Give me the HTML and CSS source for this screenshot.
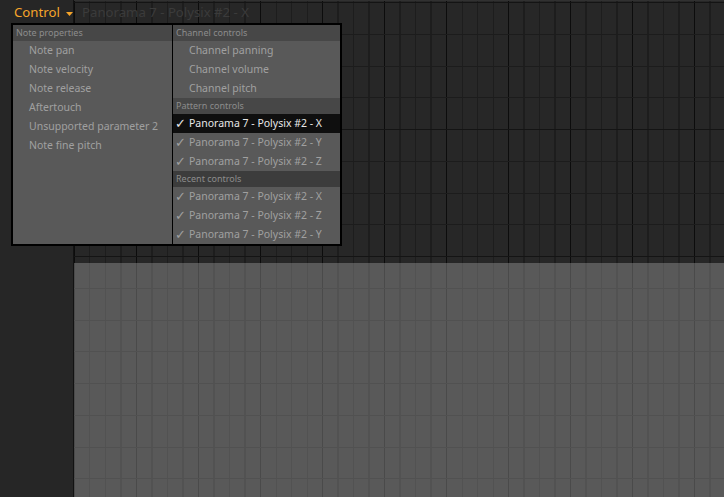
FILE: index.html
```html
<!DOCTYPE html>
<html>
<head>
<meta charset="utf-8">
<link rel="stylesheet" href="styles.css">
</head>
<body>
<div class="app">
  <aside class="side">
    <div class="ctl">Control<svg class="arrow" width="7" height="4" viewBox="0 0 7 4"><path d="M0 0H7L3.5 4Z" fill="#f6a52a"/></svg></div>
  </aside>
  <main class="main">
    <div class="upper">
      <div class="title">Panorama 7 - Polysix #2 - X</div>
    </div>
    <div class="lower"></div>
  </main>
</div>

<div class="menu">
  <div class="col col-left">
    <div class="hdr">Note properties</div>
    <div class="item">Note pan</div>
    <div class="item">Note velocity</div>
    <div class="item">Note release</div>
    <div class="item">Aftertouch</div>
    <div class="item">Unsupported parameter 2</div>
    <div class="item">Note fine pitch</div>
  </div>
  <div class="col col-right">
    <div class="hdr">Channel controls</div>
    <div class="item">Channel panning</div>
    <div class="item">Channel volume</div>
    <div class="item">Channel pitch</div>
    <div class="hdr">Pattern controls</div>
    <div class="item sel"><span class="chk">✓</span>Panorama 7 - Polysix #2 - X</div>
    <div class="item"><span class="chk">✓</span>Panorama 7 - Polysix #2 - Y</div>
    <div class="item"><span class="chk">✓</span>Panorama 7 - Polysix #2 - Z</div>
    <div class="hdr dark">Recent controls</div>
    <div class="item"><span class="chk">✓</span>Panorama 7 - Polysix #2 - X</div>
    <div class="item"><span class="chk">✓</span>Panorama 7 - Polysix #2 - Z</div>
    <div class="item"><span class="chk">✓</span>Panorama 7 - Polysix #2 - Y</div>
  </div>
</div>
</body>
</html>
```
FILE: styles.css
```css
* { box-sizing: border-box; }
html, body {
  margin: 0;
  padding: 0;
  width: 724px;
  height: 497px;
  overflow: hidden;
  background: #262626;
  font-family: "Noto Sans", "Open Sans", sans-serif;
}
.app {
  display: flex;
  width: 724px;
  height: 497px;
}
.side {
  width: 74px;
  flex: none;
  background: #262626;
  border-right: 1px solid #121212;
}
.ctl {
  display: flex;
  align-items: center;
  height: 24px;
  padding-left: 14px;
  color: #f6a52a;
  font-size: 13.2px;
  line-height: 24px;
}
.arrow {
  margin-left: 6px;
  margin-top: 3px;
}
.main {
  flex: 1;
  display: flex;
  flex-direction: column;
}
.upper {
  height: 263px;
  flex: none;
  border-top: 1px solid #313131;
  background-color: #272727;
  background-image:
    repeating-linear-gradient(180deg, transparent 0 1px, #141414 1px 2px, transparent 2px 127px),
    repeating-linear-gradient(180deg, transparent 0 1px, #1c1c1c 1px 2px, transparent 2px 31.75px),
    repeating-linear-gradient(90deg, #0c0c0c 0 1px, transparent 1px 62px),
    repeating-linear-gradient(90deg, #1d1d1d 0 1px, transparent 1px 15.5px);
}
.title {
  height: 23px;
  line-height: 23px;
  padding-left: 8px;
  font-size: 13.2px;
  color: #3b3b3b;
}
.lower {
  flex: 1;
  background-color: #595959;
  background-image:
    repeating-linear-gradient(180deg, transparent 0 25px, #515151 25px 26px, transparent 26px 31.75px),
    repeating-linear-gradient(90deg, #4a4a4a 0 1px, transparent 1px 62px),
    repeating-linear-gradient(90deg, #525252 0 1px, transparent 1px 15.5px);
}
.menu {
  position: absolute;
  left: 11px;
  top: 23px;
  width: 331px;
  height: 223px;
  display: flex;
  border: 2px solid #000;
  background: #595959;
}
.col {
  display: flex;
  flex-direction: column;
}
.col-left {
  width: 160px;
  border-right: 1px solid #000;
}
.col-right {
  flex: 1;
}
.hdr {
  height: 16px;
  line-height: 16px;
  padding-left: 3px;
  background: #474747;
  color: #8c8c8c;
  font-size: 9px;
}
.hdr.dark {
  background: #3c3c3c;
}
.item {
  position: relative;
  height: 19px;
  line-height: 19px;
  padding-left: 16px;
  color: #a0a0a0;
  font-size: 10.5px;
  white-space: nowrap;
}
.item.sel {
  background: #0f0f0f;
  color: #e8e8e8;
}
.chk {
  position: absolute;
  left: 2px;
  top: 0;
  font-size: 12.5px;
}
```
